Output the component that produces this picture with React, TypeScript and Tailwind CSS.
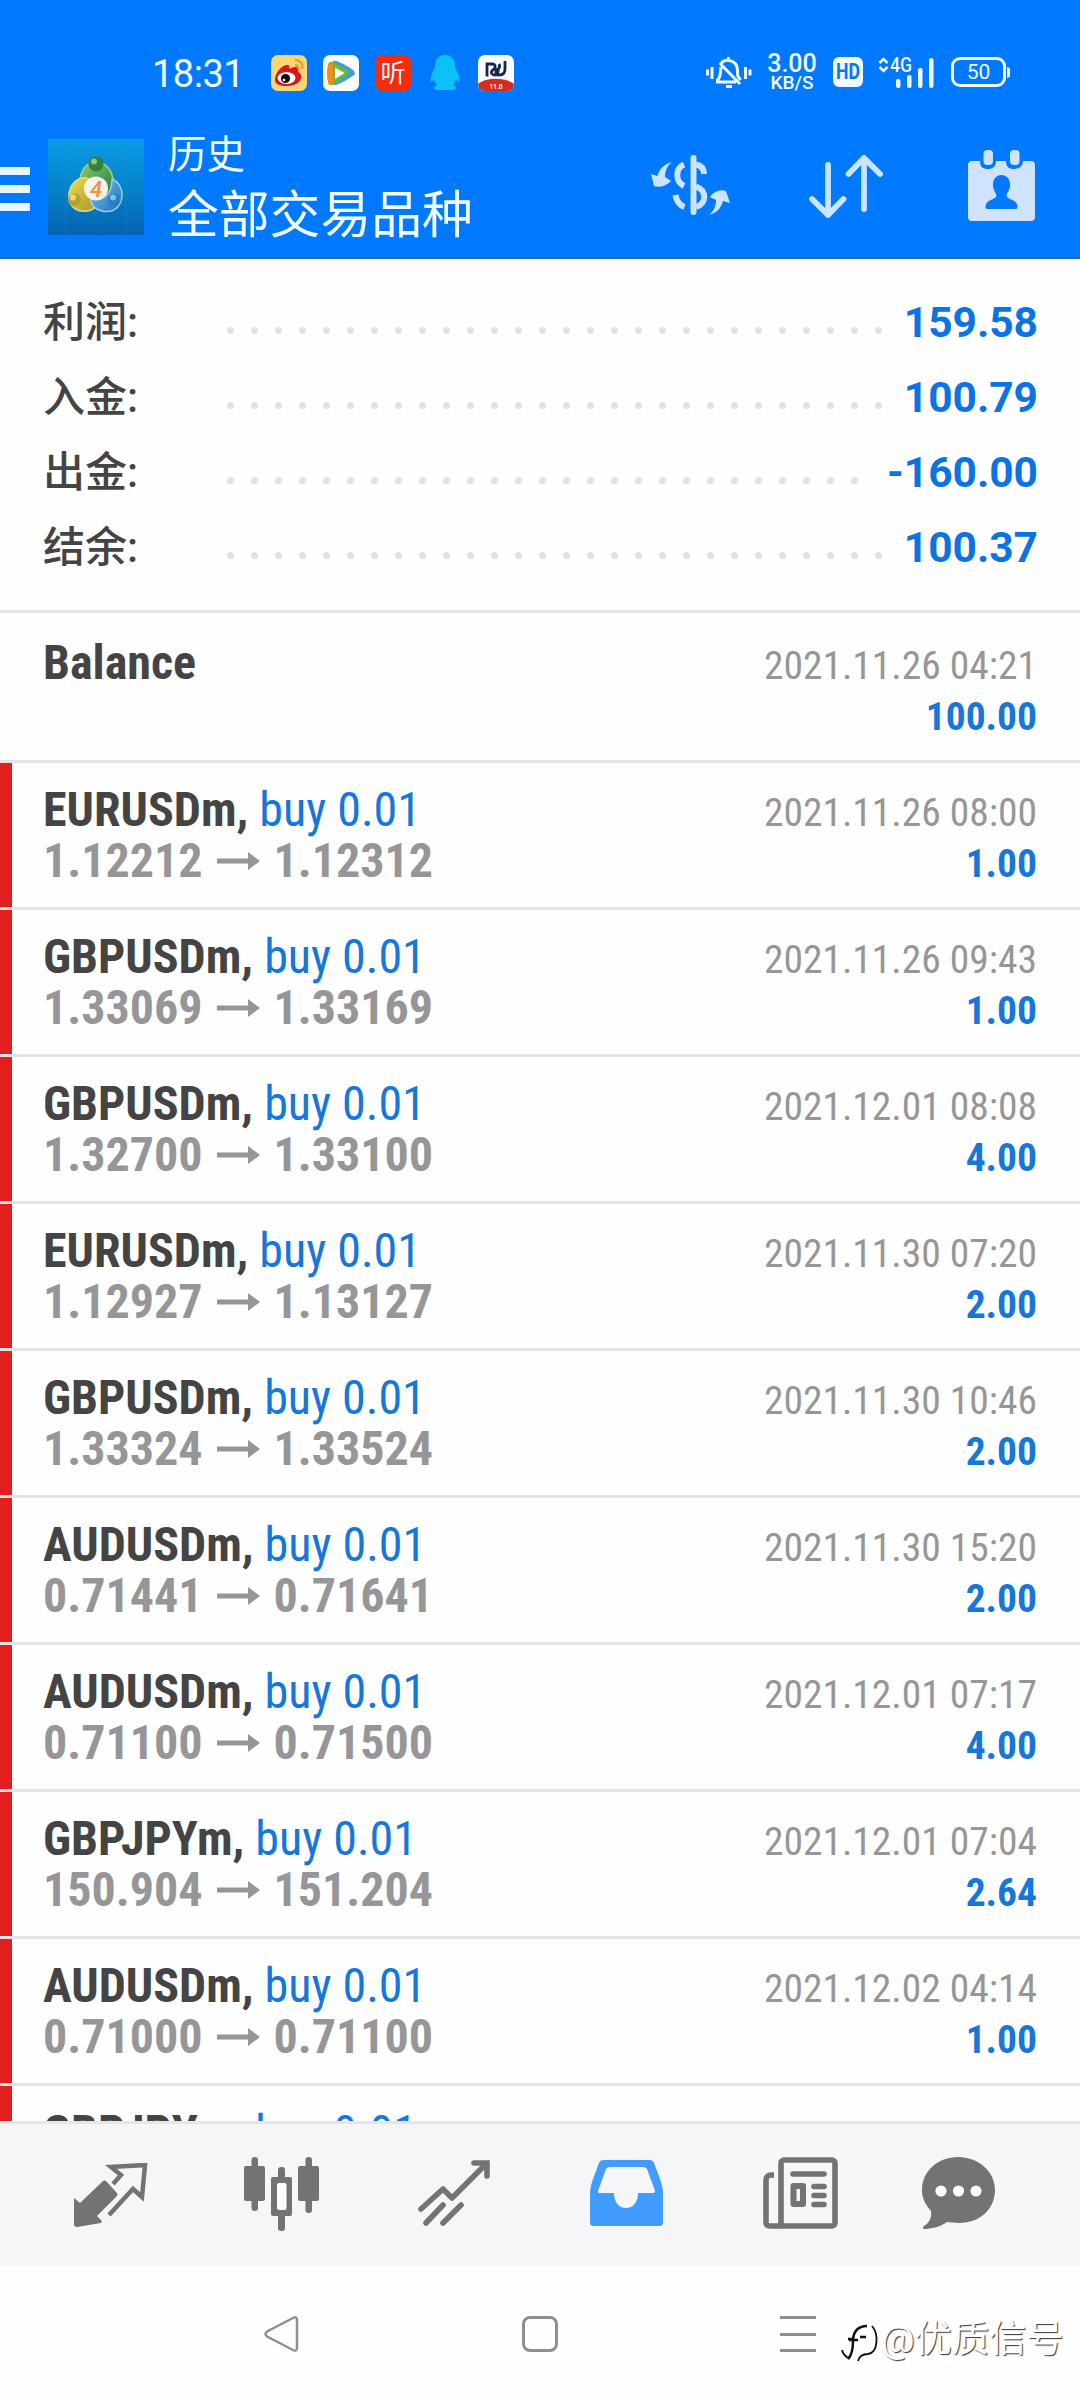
import { FC, ReactNode } from "react";
import { clsx } from "clsx";

interface Deal {
    symbol: string;
    open: string;
    close: string;
    time: string;
    profit: string;
}

const summary = [
    { label: "利润", value: "159.58", dots: 28 },
    { label: "入金", value: "100.79", dots: 28 },
    { label: "出金", value: "-160.00", dots: 27 },
    { label: "结余", value: "100.37", dots: 28 }
];

const deals: Deal[] = [
    { symbol: "EURUSDm", open: "1.12212", close: "1.12312", time: "2021.11.26 08:00", profit: "1.00" },
    { symbol: "GBPUSDm", open: "1.33069", close: "1.33169", time: "2021.11.26 09:43", profit: "1.00" },
    { symbol: "GBPUSDm", open: "1.32700", close: "1.33100", time: "2021.12.01 08:08", profit: "4.00" },
    { symbol: "EURUSDm", open: "1.12927", close: "1.13127", time: "2021.11.30 07:20", profit: "2.00" },
    { symbol: "GBPUSDm", open: "1.33324", close: "1.33524", time: "2021.11.30 10:46", profit: "2.00" },
    { symbol: "AUDUSDm", open: "0.71441", close: "0.71641", time: "2021.11.30 15:20", profit: "2.00" },
    { symbol: "AUDUSDm", open: "0.71100", close: "0.71500", time: "2021.12.01 07:17", profit: "4.00" },
    { symbol: "GBPJPYm", open: "150.904", close: "151.204", time: "2021.12.01 07:04", profit: "2.64" },
    { symbol: "AUDUSDm", open: "0.71000", close: "0.71100", time: "2021.12.02 04:14", profit: "1.00" }
];

/* Status bar */

const WeiboIcon = () => (
    <svg width="36" height="36" viewBox="0 0 36 36">
        <rect width="36" height="36" rx="7" fill="#fbd774" />
        <path d="M4 25C4 17 12 9 17 10c2 1 1 4 1 4s7-4 9-1c1 2 0 4 0 4s4 1 3 6c-1 5-7 8-14 8S4 29 4 25z" fill="#e0141c" />
        <ellipse cx="15.500" cy="23" rx="9" ry="6" fill="#fff" />
        <circle cx="14.500" cy="23.500" r="4.600" fill="#111" />
        <circle cx="13" cy="25" r="1.300" fill="#fff" />
        <path d="M24 5c5 0 8 4 7.500 9M24 10c2 0 3.500 1.500 3 4" fill="none" stroke="#ee9a1c" strokeWidth="2.200" />
    </svg>
);

const VideoIcon = () => (
    <svg width="36" height="36" viewBox="0 0 36 36">
        <rect width="36" height="36" rx="7" fill="#fff" />
        <path d="M10 6c3-2 20 8 21 10s1 3 0 4S15 31 10 30z" fill="#3f9fdb" />
        <path d="M5 10c0-2 2-4 5-3l15 9c1 1 1 2 0 3L10 30c-3 1-5-1-5-3C4 21 4 15 5 10z" fill="#6cb92d" />
        <path d="M5 10c1-2 3-2 5-1v20c-2 1-5 1-5-2-1-6-1-11 0-17z" fill="#f58a1f" />
        <path d="M12 12.500l9.500 5.500-9.500 6z" fill="#fff" />
    </svg>
);

const PenguinIcon = () => (
    <svg width="30" height="36" viewBox="0 0 30 36">
        <path d="M15 0C8 0 5 5 5 11c0 3-4 7-4.500 14 0 3 2 2 3.500-1 .5 3 2 5 3 6-2 1-3 2-3 3 0 3 7 2 11 2s11 1 11-2c0-1-1-2-3-3 1-1 2.500-3 3-6 1.500 3 3.500 4 3.500 1C29 18 25 14 25 11 25 5 22 0 15 0z" fill="#0cc0f8" />
    </svg>
);

const TradeIcon = () => (
    <svg width="36" height="36" viewBox="0 0 36 36">
        <rect width="36" height="36" rx="7" fill="#fff" />
        <path d="M0 29C8 22 28 22 36 29a7 7 0 0 1-7 7H7a7 7 0 0 1-7-7z" fill="#d52c20" />
        <path d="M9 21.500V9h5c4 0 4 4 1 6-2 1-2 3-1 4M27 6v8c0 4-2 6-6 6s-4-4-1-6c2-1 2-3 1-5M14 19c4 3 7-1 6-6" fill="none" stroke="#14284f" strokeWidth="2.800" />
        <text x="18" y="33.500" textAnchor="middle" fontSize="6.500" fontWeight="700" fill="#fff" fontFamily="Roboto">11.0</text>
    </svg>
);

const SilentIcon = () => (
    <svg width="46" height="32" viewBox="0 0 46 32" fill="none" stroke="#f2f9ff" strokeWidth="3">
        <path d="M1.500 12.500v6M6 10v12M39.500 10v12M44 12.500v6" />
        <path d="M22.500 0v4M14 8c5-8 17-5 17.500 5v4c0 3 2 4 3 6M15 10c-1 7 0 10-3.500 13v2H30M15 7.500L34 27M20 29.500h6" />
    </svg>
);

const SignalIcon = () => (
    <svg width="57" height="32" viewBox="0 0 57 32" fill="#f2f9ff">
        <path d="M1.500 6L5.500 2l4 4M1.500 10l4 4 4-4" fill="none" stroke="#f2f9ff" strokeWidth="2.600" />
        <text x="12" y="15" fontSize="19.500" textLength="22" lengthAdjust="spacingAndGlyphs" fontWeight="500" fontFamily="Roboto">4G</text>
        <rect x="18" y="22" width="4.500" height="9" rx="2" />
        <rect x="29" y="18" width="4.500" height="13" rx="2" />
        <rect x="40" y="11" width="4.500" height="20" rx="2" />
        <rect x="51" y="1" width="4.500" height="30" rx="2" />
    </svg>
);

const StatusBar = () => (
    <div className="flex h-[116px] items-start pt-[55px] pl-[152px] text-[#f2f9ff]">
        <div className="mt-px w-[119px] text-[38px] leading-[36px] tracking-[-0.5px]">18:31</div>
        <div className="flex items-center gap-4">
            <WeiboIcon />
            <VideoIcon />
            <div className="flex h-9 w-9 items-center justify-center rounded-[7px] bg-[#f32c0c] text-[25px] leading-none">听</div>
            <div className="flex w-[35px] justify-center"><PenguinIcon /></div>
            <TradeIcon />
        </div>
        <div className="ml-[192px] mt-[2px]"><SilentIcon /></div>
        <div className="-mt-px ml-[14px] flex w-[52px] flex-col items-center font-medium">
            <span className="text-[25px] leading-[20px]">3.00</span>
            <span className="text-[19px] leading-[18px]">KB/S</span>
        </div>
        <div className="ml-[15px] mt-[2px] flex h-[30px] w-[30px] items-center justify-center rounded-[6px] bg-[#f2f9ff] text-[#0079ff]">
            <span className="scale-x-[0.8] text-[22px] leading-none font-bold">HD</span>
        </div>
        <div className="ml-[15px] mt-[2px]"><SignalIcon /></div>
        <div className="ml-[16px] mt-[2px] flex items-center">
            <div className="flex h-[30px] w-[55px] items-center justify-center rounded-[9px] border-[3px] border-[#f2f9ff] text-[21px] leading-none">50</div>
            <div className="ml-[1px] h-[11px] w-[3px] rounded-r bg-[#f2f9ff]" />
        </div>
    </div>
);

/* App header */

const TerminalLogo = () => (
    <svg width="96" height="96" viewBox="0 0 96 96">
        <defs>
            <linearGradient id="tile" x1="0" y1="0" x2="0" y2="1">
                <stop offset="0" stopColor="#0a9be6" />
                <stop offset="0.5" stopColor="#0583c9" />
                <stop offset="1" stopColor="#0563b4" />
            </linearGradient>
            <linearGradient id="person-green" x1="0" y1="0" x2="1" y2="1">
                <stop offset="0" stopColor="#8fcc72" />
                <stop offset="1" stopColor="#1d7a36" />
            </linearGradient>
            <linearGradient id="person-yellow" x1="0" y1="0" x2="1" y2="1">
                <stop offset="0" stopColor="#f0dc50" />
                <stop offset="1" stopColor="#a8932a" />
            </linearGradient>
            <linearGradient id="person-blue" x1="0" y1="0" x2="1" y2="1">
                <stop offset="0" stopColor="#7cc4f0" />
                <stop offset="1" stopColor="#1a70bd" />
            </linearGradient>
        </defs>
        <rect width="96" height="96" fill="url(#tile)" />
        <path d="M0 17h96M18 0v96M48 0v96M78 0v96" stroke="#25b1ec" strokeOpacity="0.2" />
        <path d="M32 43c0-12 7-20 16-20s17 8 17 20-5 16-13 16-20-4-20-16z" fill="url(#person-green)" stroke="#a4cf95" strokeWidth="1.500" />
        <path d="M34 39c-9 2-14 11-13 21 1 9 9 13 18 12 8-1 12-7 10-16s-6-19-15-17z" fill="url(#person-yellow)" stroke="#e3d980" strokeWidth="1.500" />
        <path d="M64 40c8 3 12 13 9 22s-11 12-19 10-13-8-10-14c10 6 20-2 20-18z" fill="url(#person-blue)" stroke="#98d0ee" strokeWidth="1.500" />
        <circle cx="48" cy="25" r="7.500" fill="#32823c" />
        <circle cx="46" cy="22.500" r="3" fill="#8fc58c" />
        <circle cx="26.500" cy="61" r="6.500" fill="#b9a02d" />
        <circle cx="25" cy="58.500" r="3" fill="#e9d779" />
        <circle cx="66" cy="61" r="6.500" fill="#2a7fc4" />
        <circle cx="65" cy="58.500" r="3" fill="#83bfe8" />
        <circle cx="48" cy="49.500" r="12" fill="#f3f1ec" />
        <text x="48" y="57.500" textAnchor="middle" fontSize="22" fontStyle="italic" fontWeight="500" fill="#f0913a" fontFamily="Roboto">4</text>
    </svg>
);

const CurrencyIcon = () => (
    <svg width="79" height="62" viewBox="0 0 79 62" fill="#cbe4ff">
        <rect x="39.500" y="0" width="6" height="60" rx="3" />
        <path d="M33 9.500c-9 4-9 17 0 21.500M24.500 40c1 7 4 10 9 12M45 9.500c5 1 8 4 8 9.500M45 31.500c11 4 11 17 0 20.500" fill="none" stroke="#cbe4ff" strokeWidth="6" />
        <path d="M21 7C13 9 8 14 6.500 21L0 19l3 12c6 2 12 0 17-5l-6-4c0-6 2-11 7-15zM58 60c8-2 12-7 14-14l7 2-4-12c-6-2-12 0-16 6l6 3c0 6-2 11-7 15z" />
    </svg>
);

const SortIcon = () => (
    <svg width="74" height="64" viewBox="0 0 74 64" fill="none" stroke="#cbe4ff" strokeWidth="5.800" strokeLinecap="round" strokeLinejoin="round">
        <path d="M19 10v50M3 44l16 16 15.500-16M55 54V3M39.500 19L55 3l16 16" />
    </svg>
);

const CalendarIcon = () => (
    <svg width="70" height="72" viewBox="0 0 70 72">
        <path d="M5 11h8c0 7 4 8 8 8s8-2 8-8h10c0 7 4 8 8 8s9-2 9-8h8c3 0 4 2 4 4v52c0 3-2 4-4 4H5c-3 0-4-2-4-4V15c0-2 1-4 4-4z" fill="#cfe2fe" />
        <rect x="16.500" y="0" width="9.500" height="15" rx="4" fill="#cfe2fe" />
        <rect x="43" y="0" width="9.500" height="15" rx="4" fill="#cfe2fe" />
        <path d="M34.500 25c-6 0-9 5-8.500 11 .5 5 3 6 3.500 10-1 4-11 3-11 11 0 1.500 1 2 2 2h28c1 0 2-.5 2-2 0-8-10-7-11-11 .5-4 3-5 3.500-10 .5-6-2.500-11-8.500-11z" fill="#0079ff" />
    </svg>
);

const Header = () => (
    <header className="h-[259px] border-b-2 border-[#1f69b8] bg-[#0079ff]">
        <StatusBar />
        <div className="flex h-[141px] items-start text-[#f2fbff]">
            <div className="mt-[51px] flex w-[30px] flex-col gap-[10px]">
                <div className="h-2 bg-[#e6f5ff]" />
                <div className="h-2 bg-[#e6f5ff]" />
                <div className="h-2 bg-[#e6f5ff]" />
            </div>
            <div className="ml-[18px] mt-[23px]"><TerminalLogo /></div>
            <div className="ml-[24px] w-[483px]">
                <div className="mt-[16px] text-[38.500px] leading-[46px]">历史</div>
                <div className="mt-[9px] text-[50.800px] leading-[58px]">全部交易品种</div>
            </div>
            <div className="mt-[39px]"><CurrencyIcon /></div>
            <div className="ml-[79px] mt-[39px]"><SortIcon /></div>
            <div className="ml-[84px] mt-[34px]"><CalendarIcon /></div>
        </div>
    </header>
);

/* History */

const SummaryRow: FC<{ label: string; value: string; dots: number }> = ({ label, value, dots }) => (
    <div className="flex h-[75px] items-center">
        <div className="w-[184px] text-[42px] font-medium text-[#444]">{label}:</div>
        <div className="mt-[15px] flex gap-[17px]">
            {Array.from({ length: dots }, (_, i) => (
                <div key={i} className="size-[7px] rounded-full bg-[#e2e2e2]" />
            ))}
        </div>
        <div className="ml-auto text-[42.500px] font-bold text-[#0b74e5]">{value}</div>
    </div>
);

const Condensed: FC<{ className?: string; children: ReactNode }> = ({ className, children }) => (
    <div className={clsx("font-['Roboto_Condensed','Roboto'] leading-[51px] whitespace-pre [font-stretch:75%]", className)}>
        {children}
    </div>
);

const PriceArrow = () => (
    <svg width="43" height="20" viewBox="0 0 43 20" fill="#969696" className="mx-[14px] inline-block">
        <path d="M0 7.500h31V1l12 9-12 9v-6.500H0z" />
    </svg>
);

const RowValues: FC<{ time: string; profit: string }> = ({ time, profit }) => (
    <div className="ml-auto pt-[3px] text-right text-[39.500px]">
        <Condensed className="text-[#969696]">{time}</Condensed>
        <Condensed className="font-bold text-[#1576db]">{profit}</Condensed>
    </div>
);

const DealRow: FC<{ deal: Deal }> = ({ deal }) => (
    <div className="flex h-[147px] shrink-0 border-b-[3px] border-[#e3e3e3] pr-[43px]">
        <div className="w-3 bg-[#e31e1f]" />
        <div className="flex flex-1 pt-[21px] pl-[31px] text-[48px]">
            <div>
                <Condensed className="font-bold text-[#444]">
                    {deal.symbol}, <span className="font-normal text-[#1576db]">buy 0.01</span>
                </Condensed>
                <Condensed className="flex items-center font-bold text-[#969698]">
                    {deal.open}
                    <PriceArrow />
                    {deal.close}
                </Condensed>
            </div>
            <RowValues time={deal.time} profit={deal.profit} />
        </div>
    </div>
);

/* Bottom tabs */

const QuotesIcon = () => (
    <svg width="74" height="66" viewBox="0 0 74 66">
        <path d="M0 35l6 5 22-21c2-2 3-2 5 0l9 10c2 2 2 3 0 5L23 53l5 5-1 2-24 4c-2 0-3-1-3-3z" fill="#737375" />
        <path d="M39 21l8-9-10-8 34-2-3 32-9-8-24 26" fill="none" stroke="#737375" strokeWidth="4.500" />
    </svg>
);

const ChartIcon = () => (
    <svg width="76" height="75" viewBox="0 0 76 75" fill="#737375">
        <rect x="7.500" y="0" width="6.500" height="54" rx="3" />
        <rect x="0" y="9" width="21" height="35" rx="2" />
        <rect x="61.500" y="0" width="6.500" height="56" rx="3" />
        <rect x="54" y="9" width="21" height="35" rx="2" />
        <rect x="34" y="10" width="7" height="64" rx="3" />
        <rect x="27" y="20" width="21" height="39" rx="2" />
        <rect x="33" y="26" width="9.500" height="27" rx="2" fill="#fff" />
    </svg>
);

const TradeTabIcon = () => (
    <svg width="72" height="67" viewBox="0 0 72 67" fill="none" stroke="#737375" strokeWidth="5.600" strokeLinecap="round">
        <path d="M3 49l22-20 9 9L68 4M8 63l17-18M25 63l18-18" strokeLinejoin="round" />
        <path d="M56 3h13v13" />
    </svg>
);

const HistoryIcon = () => (
    <svg width="73" height="67" viewBox="0 0 73 67">
        <path fillRule="evenodd" d="M14 0h45c3 0 4 1 5 3l6 16c2 6 3 10 3 15v28c0 3-1 4-4 4H4c-3 0-4-1-4-4V34c0-5 1-9 3-15L9 3c1-2 2-3 5-3zm6 7c-2 0-3 1-4 2L8 31c0 2 1 2 2 2h14c0 9 5 15 12 15s12-6 12-15h15c2 0 2-1 2-2L57 9c-1-1-2-2-4-2z" fill="#429bff" />
    </svg>
);

const NewsIcon = () => (
    <svg width="76" height="73" viewBox="0 0 76 73" fill="none" stroke="#737375" strokeWidth="5.600" strokeLinejoin="round">
        <rect x="18" y="3" width="54" height="66" rx="3" />
        <path d="M11 18H8c-3 0-5 2-5 5v42c0 3 1 4 4 4h14" />
        <path d="M30 17h31M51 29.500h10M51 38.500h10M51 47.500h10" strokeLinecap="round" />
        <rect x="30.500" y="29" width="9.500" height="18" strokeWidth="6" />
    </svg>
);

const MessagesIcon = () => (
    <svg width="73" height="73" viewBox="0 0 73 73">
        <path d="M36 0c20 0 37 14 37 33S58 66 37 66c-5 0-9-1-12-1C18 70 9 72 2 72c-2-1-1-2 0-3 5-3 8-8 7-15C3 47 0 41 0 33 0 14 16 0 36 0z" fill="#737373" />
        <circle cx="19" cy="34" r="5.600" fill="#fff" />
        <circle cx="36.500" cy="34" r="5.600" fill="#fff" />
        <circle cx="54" cy="34" r="5.600" fill="#fff" />
    </svg>
);

const TabBar = () => (
    <nav className="flex h-[145px] items-start border-t-[3px] border-[#e6e6e6] bg-[#f6f6f8]">
        <div className="mt-[39px] ml-[74px] w-[170px]"><QuotesIcon /></div>
        <div className="mt-[33px] w-[174px]"><ChartIcon /></div>
        <div className="mt-[36px] w-[172px]"><TradeTabIcon /></div>
        <div className="mt-[36px] w-[173px]"><HistoryIcon /></div>
        <div className="mt-[33px] w-[159px]"><NewsIcon /></div>
        <div className="mt-[33px]"><MessagesIcon /></div>
    </nav>
);

const SystemNav = () => (
    <div className="flex h-[134px] items-start pt-[50px] pl-[264px]">
        <svg width="36" height="36" viewBox="0 0 36 36" fill="none" stroke="#8f8f91" strokeWidth="2.500" strokeLinejoin="round">
            <path d="M3 15.500L29 2q4-2 4 2v28q0 4-4 2L3 20.500q-3-2.500 0-5z" />
        </svg>
        <div className="ml-[222px] size-9 rounded-[8px] border-[3px] border-[#8f8f91]" />
        <div className="ml-[222px] flex w-9 flex-col gap-[13.500px]">
            <div className="h-[3px] bg-[#8f8f91]" />
            <div className="h-[3px] bg-[#8f8f91]" />
            <div className="h-[3px] bg-[#8f8f91]" />
        </div>
        <div className="mt-[3px] ml-[25px] flex items-start text-[37.300px] leading-[40px] whitespace-nowrap text-white [text-shadow:1px_1px_1px_#333]">
            <svg width="38" height="44" viewBox="0 0 38 44" className="mt-[4px]" fill="none" stroke="#111" strokeWidth="2.500">
                <path d="M7 16h5c1-8 5-13 14-13M8 17h9M12 18c0 8-1 14-5 18M19 14h6" />
                <path d="M31 3c7 8 6 27-4 28-6 0-9 3-10 7M1 27c1 4 3 6 6 8" strokeWidth="1.800" />
            </svg>
            <span className="ml-[2px]">@优质信号</span>
        </div>
    </div>
);

export default function App() {
    return (
        <div className="flex h-[2400px] w-[1080px] flex-col overflow-hidden bg-[#fefefe] font-['Roboto','Noto_Sans_CJK_SC',sans-serif]">
            <Header />

            <section className="h-[354px] border-b-[3px] border-[#e3e3e3] pt-[26px] pr-[42px] pl-[43px]">
                {summary.map((row) => (
                    <SummaryRow key={row.label} {...row} />
                ))}
            </section>

            <main className="flex h-[1508px] flex-col overflow-hidden">
                <div className="flex h-[150px] shrink-0 border-b-[3px] border-[#e3e3e3] pt-6 pr-[43px] pl-[43px]">
                    <Condensed className="text-[48px] font-bold text-[#444]">Balance</Condensed>
                    <RowValues time="2021.11.26 04:21" profit="100.00" />
                </div>
                {deals.map((deal) => (
                    <DealRow key={deal.time} deal={deal} />
                ))}
                {/* Cut off by the tab bar */}
                <DealRow deal={{ symbol: "GBPJPYm", open: "", close: "", time: "", profit: "" }} />
            </main>

            <TabBar />
            <SystemNav />
        </div>
    );
}
